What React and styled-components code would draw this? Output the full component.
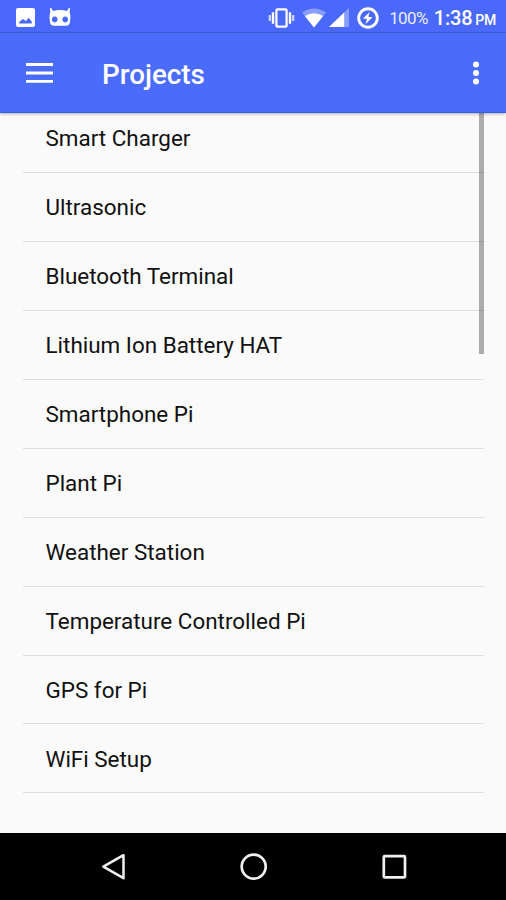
import React from 'react';
import styled, { createGlobalStyle } from 'styled-components';

const projects = [
  'Smart Charger',
  'Ultrasonic',
  'Bluetooth Terminal',
  'Lithium Ion Battery HAT',
  'Smartphone Pi',
  'Plant Pi',
  'Weather Station',
  'Temperature Controlled Pi',
  'GPS for Pi',
  'WiFi Setup',
];

const StatusIcons = () => (
  <>
    <StatusGroup>
      <svg width="19" height="19" viewBox="0 0 19 19">
        <path
          fill="#fff"
          fillRule="evenodd"
          d="M2 0h15a2 2 0 0 1 2 2v15a2 2 0 0 1-2 2H2a2 2 0 0 1-2-2V2a2 2 0 0 1 2-2zM3.200 15.500h12.600v-2l-3.300-3.800-2.500 3.300-3.200-2-3.600 3z"
        />
      </svg>
      <svg width="22" height="19" viewBox="0 0 22 19">
        <path
          fill="#fff"
          fillRule="evenodd"
          d="M1 0h1.200l1.800 2.900Q11 1.300 18 2.900L19.800 0H21l-.4 4.600q.8 1.400.8 4-.1 4.500-.7 6.700-.7 2.500-3.800 2.500H5q-3.100 0-3.800-2.500Q.6 13.100.5 8.600q-.1-2.600.8-4zM5.700 8.600a2.900 2.900 0 1 0 .01 0zM16.200 8.600a2.900 2.900 0 1 0 .01 0z"
        />
      </svg>
    </StatusGroup>
    <StatusGroup $right>
      <svg width="27" height="20" viewBox="0 0 27 20">
        <rect x="8.400" y="1.300" width="10.200" height="17.400" rx="1" fill="none" stroke="#fff" strokeWidth="2.200" />
        <path d="M5 4.200v11.600M22 4.200v11.600" stroke="#fff" strokeWidth="2.400" />
        <path d="M1.800 7v6M25.200 7v6" stroke="#fff" strokeWidth="2.200" opacity="0.75" />
      </svg>
      <WifiIcon width="24" height="20" viewBox="0 0 24 20">
        <path fill="#fff" opacity="0.350" d="M12 19.500 0 4.500Q12-3.500 24 4.500z" />
        <path fill="#fff" d="M12 19.500 2.800 8Q12 2.400 21.200 8z" />
      </WifiIcon>
      <svg width="20" height="19" viewBox="0 0 20 19">
        <path fill="#fff" opacity="0.350" d="M0 19 20 0v19z" />
        <path fill="#fff" d="M0 19 15.200 4.500V19z" />
      </svg>
      <BatteryIcon width="22" height="22" viewBox="0 0 22 22">
        <circle cx="11" cy="11" r="9.300" fill="none" stroke="#fff" strokeWidth="2.900" />
        <path fill="#fff" d="M12.600 5 6 11.600l4 .5-1.400 4.900 7-6.700-4.300-.5z" />
      </BatteryIcon>
      <Percent>100%</Percent>
      <Clock>
        1:38 <small>PM</small>
      </Clock>
    </StatusGroup>
  </>
);

const App = () => {
  return (
    <>
      <GlobalStyle />
      <Screen>
        <StatusBar>
          <StatusIcons />
        </StatusBar>
        <Toolbar>
          <IconButton aria-label="Menu">
            <svg width="27" height="21" viewBox="0 0 27 21">
              <path d="M0 2.500h27M0 11h27M0 19.300h27" stroke="#fff" strokeWidth="2.800" />
            </svg>
          </IconButton>
          <Title>Projects</Title>
          <IconButton aria-label="More">
            <svg width="8" height="25" viewBox="0 0 8 25">
              <circle cx="4" cy="4.400" r="3" fill="#fff" />
              <circle cx="4" cy="13" r="3" fill="#fff" />
              <circle cx="4" cy="21.500" r="3" fill="#fff" />
            </svg>
          </IconButton>
        </Toolbar>
        <Content>
          <List>
            {projects.map((name) => (
              <Row key={name}>{name}</Row>
            ))}
          </List>
          <ScrollThumb />
        </Content>
        <NavBar>
          <svg width="28" height="28" viewBox="0 0 28 28">
            <path d="M24.500 2.200v23L4.300 13.700z" fill="none" stroke="#f0f0f0" strokeWidth="2.500" strokeLinejoin="round" />
          </svg>
          <svg width="28" height="28" viewBox="0 0 28 28">
            <circle cx="13.700" cy="13.600" r="12" fill="none" stroke="#f0f0f0" strokeWidth="2.700" />
          </svg>
          <svg width="28" height="28" viewBox="0 0 28 28">
            <rect x="3.800" y="3.200" width="21.200" height="21.200" rx="1" fill="none" stroke="#f0f0f0" strokeWidth="2.700" />
          </svg>
        </NavBar>
      </Screen>
    </>
  );
};

export default App;

const GlobalStyle = createGlobalStyle`
* {
    box-sizing: border-box;
}

body {
    margin: 0;
    font-family: Roboto, sans-serif;
    background: #fafafa;
}
`

const Screen = styled.div`
width: 506px;
height: 900px;
display: flex;
flex-direction: column;
overflow: hidden;
background: #fafafa;
`

const StatusBar = styled.header`
height: 33px;
flex: none;
display: flex;
justify-content: space-between;
padding: 0 10px 0 16px;
background: #4a69fa;
border-bottom: 1px solid #425edd;
color: #fff;
`

const StatusGroup = styled.div`
display: flex;
align-items: center;
gap: ${props => (props.$right ? '0' : '14px')};
padding-top: 3px;
white-space: nowrap;

svg {
    flex: none;
}
`

const WifiIcon = styled.svg`
margin: 0 3px 0 7px;
`

const BatteryIcon = styled.svg`
margin-left: 8px;
`

const Percent = styled.span`
margin-left: 10px;
font-size: 17px;
letter-spacing: -0.6px;
color: #e8ecff;
`

const Clock = styled.span`
margin-left: 6px;
font-size: 20px;
font-weight: 500;
letter-spacing: -0.2px;

small {
    font-size: 14px;
    margin-left: -2px;
}
`

const Toolbar = styled.div`
position: relative;
z-index: 1;
height: 80px;
flex: none;
display: flex;
align-items: center;
padding: 0 26px;
background: #4b6bfb;
border-bottom: 1px solid #3c5be6;
box-shadow: 0 1px 3px rgba(0, 0, 0, 0.3);
`

const IconButton = styled.button`
display: flex;
padding: 0;
border: none;
background: none;
`

const Title = styled.h1`
flex: 1;
margin: 4px 0 0 49px;
font-size: 27.800px;
font-weight: 500;
color: #fff;
`

const Content = styled.main`
position: relative;
flex: 1;
min-height: 0;
overflow: hidden;
padding: 0 22px 0 23px;
`

const List = styled.ul`
list-style: none;
margin: -9px 0 0;
padding: 0;
`

const Row = styled.li`
height: 68.950px;
display: flex;
align-items: center;
padding: 1px 0 0 22.500px;
border-bottom: 1px solid #dfdfdf;
font-size: 22.450px;
color: #111;
`

const ScrollThumb = styled.div`
position: absolute;
top: 0;
right: 22px;
width: 5px;
height: 241px;
background: rgba(0, 0, 0, 0.31);
`

const NavBar = styled.nav`
height: 67px;
flex: none;
display: flex;
justify-content: space-between;
align-items: center;
padding: 0 98px 0 99px;
background: #000;
`
